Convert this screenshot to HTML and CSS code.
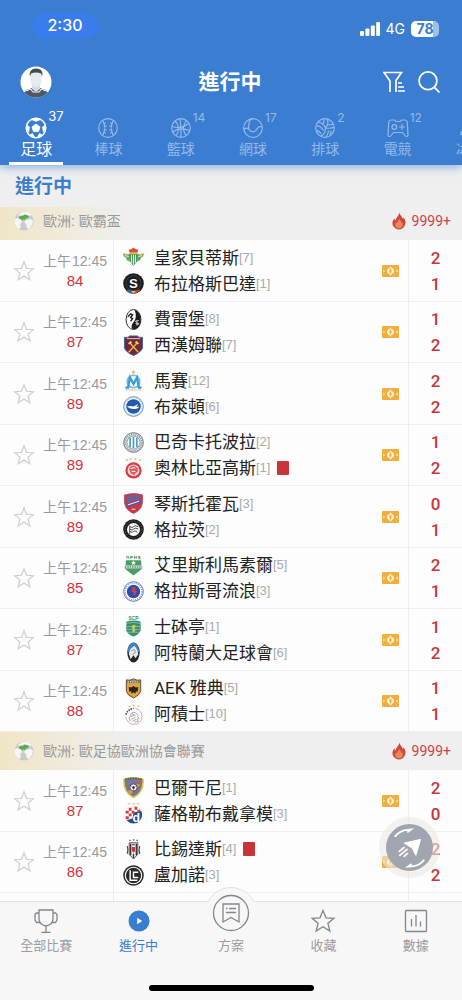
FILE: index.html
```html
<!DOCTYPE html>
<html lang="zh-Hant">
<head>
<meta charset="utf-8">
<meta name="viewport" content="width=device-width, initial-scale=1">
<title>進行中</title>
<link rel="stylesheet" href="styles.css">
</head>
<body>
<svg class="defs" aria-hidden="true">
  <symbol id="star" viewBox="0 0 22 22"><path d="M11 1.800l2.500 6.500 7 .4-5.400 4.400 1.800 6.800L11 16.100l-5.900 3.800 1.800-6.800L1.500 8.700l7-.4z" fill="none" stroke="currentColor" stroke-width="1.300" stroke-linejoin="miter"/></symbol>
  <symbol id="globe" viewBox="0 0 20 20">
    <circle cx="10" cy="10" r="9.500" fill="#c9cccd"/>
    <path d="M1 8l3-1 3 2 1 2-2 2 1 3-2 2A9.500 9.500 0 0 1 .6 9zM12 9l5-1 2 2-1 4-3 4-2-1-1-4-2-2zM8 1l6 0 4 3-3 1-4-1-5 1-2-1z" fill="#f5f6f6"/>
    <path d="M5 6l2-1.500L9 5l1-1.500 3 .5 2 1-1 2-2 .5-1 1.500-2-.5-1 1-1-1.500-2-.3z" fill="#58ac4c"/>
  </symbol>
  <symbol id="flame" viewBox="0 0 14 18">
    <path d="M7.500.5c.3 3 2.700 3.800 3.300 6.500l.9-1.500c1.800 2.500 2.500 5.500 1 8.300-1.100 2.300-3.200 3.700-5.700 3.700S1.900 16 .9 13.600C-.2 10.700 1 8 2.500 6c0 1.500.3 2 1 2.600C3.900 5.500 6.700 4.200 7.500.5z" fill="#d2473c"/>
    <path d="M7.300 6.500c.3 2 2.300 2.600 2.300 5l1-1.200c.9 2.700-.3 6-3.500 6-3.400 0-4.600-3-3.400-5.800l1.100 1.300c0-2.300 2.200-2.800 2.500-5.300z" fill="#e8895a"/>
  </symbol>
  <symbol id="cash" viewBox="0 0 17 12">
    <rect width="17" height="12" rx="1" fill="#f1ae3e"/>
    <path d="M8.500 1.300l1 1.400a3.400 3.400 0 0 1 0 6.600l-1 1.400-1-1.400a3.400 3.400 0 0 1 0-6.600z" fill="#fff3d6"/>
    <path d="M8.500 3.500v5M7 6h3" stroke="#f1ae3e" stroke-width="1.200"/>
    <path d="M1.500 4.500v3L3 6zM15.500 4.500v3L14 6z" fill="#fff3d6"/>
  </symbol>
</svg>

<div class="app">
  <header class="top">
    <div class="status">
      <span class="clock">2:30</span>
      <div class="signals">
        <svg class="bars" viewBox="0 0 20 14" aria-hidden="true"><g fill="#fff"><rect y="9" width="4" height="5" rx="1"/><rect x="5.400" y="6.500" width="4" height="7.500" rx="1"/><rect x="10.800" y="3.500" width="4" height="10.500" rx="1"/><rect x="16.200" width="3.800" height="14" rx="1"/></g></svg>
        <span class="net">4G</span>
        <span class="battery">78</span>
      </div>
    </div>
    <div class="titlebar">
      <button class="avatar" aria-label="個人">
        <svg viewBox="0 0 32 32"><defs><clipPath id="av"><circle cx="16" cy="16" r="15.500"/></clipPath></defs>
          <circle cx="16" cy="16" r="15.500" fill="#fff"/>
          <g clip-path="url(#av)"><path d="M1 32c0-5 3-7.500 7-8.500l4-1.500h8l4 1.500c4 1 7 3.500 7 8.500z" fill="#4d5965"/>
          <path d="M3 26l8-3 1.500 3h7l1.500-3 8 3" fill="none" stroke="#fff" stroke-width="1"/>
          <path d="M12 16h8v7l-4 3-4-3z" fill="#d5d9de"/>
          <path d="M10.500 8c0-3 11-3 11 0v6c0 4-3 7.500-5.500 7.500s-5.500-3.500-5.500-7.500z" fill="#e6e9ee"/>
          <path d="M10 10.500C8.800 5.500 11.500 2.500 16 2.500c5 0 7.500 3 6.100 8l-1-3c-3-1.200-7.100-1.200-10.100 0z" fill="#424b55"/></g></svg>
      </button>
      <h1>進行中</h1>
      <div class="actions">
        <button aria-label="篩選"><svg viewBox="0 0 22 22"><g fill="none" stroke="#fff" stroke-width="1.700"><path d="M7 21V10L1 1.500h17.500L13 9.500V21"/><path d="M15 12h4M15 16h6M15 20h7"/></g></svg></button>
        <button aria-label="搜尋"><svg viewBox="0 0 22 22"><g fill="none" stroke="#fff" stroke-width="1.800"><circle cx="10" cy="9.800" r="8.900"/><path d="M16.200 16.200l5.300 5.300"/></g></svg></button>
      </div>
    </div>
    <nav class="tabs" aria-label="運動">
      <button class="tab active"><span class="ico"><svg viewBox="0 0 22 22"><circle cx="11" cy="11" r="9.800" fill="none" stroke="#fff" stroke-width="1.500"/><path d="M11 7l4 2.900-1.500 4.700h-5L7 9.900zM6.500 2.500L11 4.300l4.500-1.800L11 1zM1.500 8l3 2-1 5-2-3.500zM20.500 8l-3 2 1 5 2-3.500zM5 18l2.500-1.500 2 4zM17 18l-2.500-1.500-2 4z" fill="#fff" stroke="#fff" stroke-width=".8"/></svg><sup>37</sup></span><span class="label">足球</span></button>
      <button class="tab"><span class="ico"><svg viewBox="0 0 22 22"><g fill="none" stroke="currentColor" stroke-width="1.200"><circle cx="11" cy="11" r="9.300"/><path d="M5.500 3.500c3 4.500 3 10.500 0 15M16.500 3.500c-3 4.500-3 10.500 0 15"/><path d="M6 6.500l3-.5M6.500 9h3.500M6.500 13h3.500M6 15.500l3 .5M16 6.500l-3-.5M15.500 9H12M15.500 13H12M16 15.500l-3 .5"/></g></svg></span><span class="label">棒球</span></button>
      <button class="tab"><span class="ico"><svg viewBox="0 0 22 22"><g fill="none" stroke="currentColor" stroke-width="1.200"><circle cx="11" cy="11" r="9.300"/><path d="M10 2c1 6 1 12 1 18M2 9.500c6 2 12 1 17-3.500M2.500 15c6-4 12-4 17.500-1M5 4c4.500 4 4.500 10 1 15M16.500 3.500c-4 5-4 10-.5 15"/></g></svg><sup>14</sup></span><span class="label">籃球</span></button>
      <button class="tab"><span class="ico"><svg viewBox="0 0 22 22"><g fill="none" stroke="currentColor" stroke-width="1.200"><circle cx="11" cy="11" r="9.300"/><path d="M11 1.700c-5 1-3.500 5-4.300 7.300-.8 3 1 5.500 4 5.800 3 .2 4-2.500 5.300-4.200 1.200-1.400 3-1 4.300-.6M1.700 13c2-2.500 4.300-1.500 5-1"/></g></svg><sup>17</sup></span><span class="label">網球</span></button>
      <button class="tab"><span class="ico"><svg viewBox="0 0 22 22"><g fill="none" stroke="currentColor" stroke-width="1.200"><circle cx="11" cy="11" r="9.300"/><path d="M11.500 11C10 7 6.500 5 3.500 5.500M11.500 11c3-3.500 3-6.500 1.500-9.200M11.500 11c4 .5 7 .2 8.700-1M11.500 11c0 4-2 7-5 8.300M8 7.500c2-1.500 2.500-3.500 2-5.500M2 9c3-.5 5.500 1 7.500 4.500M2.500 14c2-.7 3.500.5 4.500 3M14 7.500c1.500.5 3.500.2 5-.5M14.500 13.500c0 2.500-1 4.500-2.500 6.500M17 13.500c0 1.500-.3 2.500-.8 4"/></g></svg><sup>2</sup></span><span class="label">排球</span></button>
      <button class="tab"><span class="ico"><svg viewBox="0 0 22 22"><g fill="none" stroke="currentColor" stroke-width="1.200"><path d="M4 3h3.500l1.500 1.500h4L14.500 3H18q2 0 2.300 2L21 18q0 1.500-1.500 1.500-1 0-2-1.500l-2-2.500h-9l-2 2.500q-1 1.500-2 1.500Q1 19.500 1 18L1.700 5Q2 3 4 3z"/><circle cx="7.300" cy="10" r="2.300"/><path d="M12 10h6M15 7v6"/></g></svg><sup>12</sup></span><span class="label">電競</span></button>
      <button class="tab"><span class="ico"><svg viewBox="0 0 22 22"><path d="M2 18h7l8-16M2 18q-1-4 3-4h3l5-12" fill="none" stroke="currentColor" stroke-width="1.200"/></svg></span><span class="label">冰球</span></button>
    </nav>
  </header>

  <main>
    <h2 class="section">進行中</h2>

    <div class="league tucked"><svg class="globe"><use href="#globe"/></svg><h3>歐洲: 歐霸盃</h3><span class="heat"><svg><use href="#flame"/></svg>9999+</span></div>
    <div class="matches">
      <article class="match">
        <div class="when"><button class="fav" aria-label="收藏"><svg><use href="#star"/></svg></button><div><time><span>上午</span>12:45</time><b>84</b></div></div>
        <div class="teams"><div class="names">
          <p><svg viewBox="0 0 22 22"><path d="M0 7l7 1v7l-3-1-1-3-2-1zM22 7l-7 1v7l3-1 1-3 2-1z" fill="#6fa45c"/><path d="M6 7h10l-1 8-4 5-4-5z" fill="#4b9a5c"/><path d="M9 8v9M11 8v11M13 8v9M2 9l4 1M20 9l-4 1" stroke="#fff" stroke-width=".9"/><path d="M0 7l6 1M22 7l-6 1" stroke="#d9b652"/><path d="M7 6l-1-3 3-1 2-1.500L13 2l3 1-1 3z" fill="#d4523a"/><path d="M7 6.500h8" stroke="#e8b83e" stroke-width="1.500"/></svg>皇家貝蒂斯<small>[7]</small></p>
          <p><svg viewBox="0 0 22 22"><circle cx="11" cy="11" r="10.800" fill="#1d1c20"/><path d="M3.500 17q3 4.500 7.500 4.800v-3z" fill="#3568c7"/><path d="M11 21.800q4.500-.3 7.500-4.800L11 18.800z" fill="#d8402f"/><path d="M8.500 18.500h5L11 21.800z" fill="#ecc542"/><circle cx="11" cy="10.500" r="7.800" fill="#1d1c20" stroke="#555" stroke-width=".6"/><text x="11" y="15.500" class="mono s">S</text></svg>布拉格斯巴達<small>[1]</small></p>
        </div><svg class="cash"><use href="#cash"/></svg></div>
        <div class="score"><span>2</span><span>1</span></div>
      </article>
      <article class="match">
        <div class="when"><button class="fav" aria-label="收藏"><svg><use href="#star"/></svg></button><div><time><span>上午</span>12:45</time><b>87</b></div></div>
        <div class="teams"><div class="names">
          <p><svg viewBox="0 0 22 22"><ellipse cx="11" cy="11" rx="7.800" ry="10.500" fill="#fff" stroke="#222" stroke-width="1"/><path d="M12 1c8 1 9 18 1 20-6 1-4-5-1.500-8s2.500-8 .5-12z" fill="#1d1d1d"/><path d="M5 8l3-3 2 1-2 3 2 1-2 3" stroke="#1d1d1d" stroke-width="1.500" fill="none"/><path d="M12.500 13l4-1M13 15h4M14.500 12v5l2-1" stroke="#fff" stroke-width=".8" fill="none"/></svg>費雷堡<small>[8]</small></p>
          <p><svg viewBox="0 0 22 22"><path d="M1.500 2.500Q6 3 7 1h8q1 2 5.500 1.500v11Q19 18 11 21.500 3 18 1.500 13.500z" fill="#74263a" stroke="#426494"/><path d="M4 3.800h14" stroke="#cfd6e5"/><path d="M6 18l9-10M16 18L7 8" stroke="#e8bd43" stroke-width="1.500"/><path d="M5 9l3-3 1.500 2L7 10zM17 9l-3-3-1.500 2L15 10z" fill="#f2cc59"/></svg>西漢姆聯<small>[7]</small></p>
        </div><svg class="cash"><use href="#cash"/></svg></div>
        <div class="score"><span>1</span><span>2</span></div>
      </article>
      <article class="match">
        <div class="when"><button class="fav" aria-label="收藏"><svg><use href="#star"/></svg></button><div><time><span>上午</span>12:45</time><b>89</b></div></div>
        <div class="teams"><div class="names">
          <p><svg viewBox="0 0 22 22"><path d="M11 0l.6 1.300 1.400.2-1 1 .3 1.500-1.300-.7-1.300.7.300-1.500-1-1 1.400-.2z" fill="#dcae53"/><ellipse cx="11" cy="12" rx="6.500" ry="6.500" fill="none" stroke="#6fbde6" stroke-width="1.800"/><path d="M2.500 18.500h2.800L7.300 8 11 14.500 14.700 8l2 10.500h2.800" fill="none" stroke="#399bd3" stroke-width="2.400"/><path d="M3 21h16" stroke="#d7b06a" stroke-dasharray="2 .8"/></svg>馬賽<small>[12]</small></p>
          <p><svg viewBox="0 0 22 22"><circle cx="11" cy="11" r="10.300" fill="#fff" stroke="#4f7dbd" stroke-width=".9"/><circle cx="11" cy="11" r="9" fill="none" stroke="#8fadd6" stroke-width="1" stroke-dasharray="1 .8"/><circle cx="11" cy="11" r="7.600" fill="#245ba9"/><path d="M4 11q4-1 7 0l5-2.500-2 3 3-.5q-1 3-5 2.500-5 .5-8-2.500z" fill="#fff"/></svg>布萊頓<small>[6]</small></p>
        </div><svg class="cash"><use href="#cash"/></svg></div>
        <div class="score"><span>2</span><span>2</span></div>
      </article>
      <article class="match">
        <div class="when"><button class="fav" aria-label="收藏"><svg><use href="#star"/></svg></button><div><time><span>上午</span>12:45</time><b>89</b></div></div>
        <div class="teams"><div class="names">
          <p><svg viewBox="0 0 22 22"><circle cx="11" cy="11" r="10.300" fill="#e9ecef" stroke="#69737c"/><circle cx="11" cy="11" r="8.500" fill="none" stroke="#7e8991" stroke-width="2" stroke-dasharray="1 1.200"/><circle cx="11" cy="11" r="6.800" fill="#fff" stroke="#606970" stroke-width=".6"/><path d="M7.500 6v10M11 5v12M14.500 6v10" stroke="#4e9ecb" stroke-width="1.800"/></svg>巴奇卡托波拉<small>[2]</small></p>
          <p><svg viewBox="0 0 22 22"><path d="M3 2h2M7 1h2M12 1h2M17 2h2" stroke="#e0b85c" stroke-width="1.500"/><circle cx="11" cy="13" r="8.500" fill="#d93b43"/><circle cx="11" cy="13" r="6.200" fill="#f6dada"/><path d="M6.500 12q1-5 6-4l3.500 3-1 1 1 2-3 2-1 2-4-2z" fill="#dc5a60"/><path d="M8 11l4-1 1 1M9 14h4" stroke="#fff" stroke-width="1" fill="none"/></svg>奧林比亞高斯<small>[1]</small><i class="red" title="紅牌"></i></p>
        </div><svg class="cash"><use href="#cash"/></svg></div>
        <div class="score"><span>1</span><span>2</span></div>
      </article>
      <article class="match">
        <div class="when"><button class="fav" aria-label="收藏"><svg><use href="#star"/></svg></button><div><time><span>上午</span>12:45</time><b>89</b></div></div>
        <div class="teams"><div class="names">
          <p><svg viewBox="0 0 22 22"><path d="M1.500 2Q11-1 20.500 2v8q-1 8-9.500 11.500Q2.500 18 1.500 10z" fill="#ce3546" stroke="#a04a60" stroke-width=".8"/><path d="M4 3l14-1v4L4 10z" fill="#4272b5"/><path d="M7 2v7M10 2v6M13 2v5M16 2v4" stroke="#ce3546"/><path d="M3 12l16-5v3L4 15z" fill="#2f65ae"/><path d="M5 12.500l12-4" stroke="#fff" stroke-width="1"/><path d="M9 17h4" stroke="#eee"/></svg>琴斯托霍瓦<small>[3]</small></p>
          <p><svg viewBox="0 0 22 22"><circle cx="11" cy="11" r="10.800" fill="#1f1f1f"/><circle cx="11" cy="11" r="8.800" fill="none" stroke="#777" stroke-width="1" stroke-dasharray="1 2"/><circle cx="11" cy="11" r="6.800" fill="#fff"/><path d="M7 7v9M7 8q3 2 4 0t5 0M7 10.500q3 2 4 0t5 0M7 13q3 2 4 0t4 1" fill="none" stroke="#444" stroke-width="1"/></svg>格拉茨<small>[2]</small></p>
        </div><svg class="cash"><use href="#cash"/></svg></div>
        <div class="score"><span>0</span><span>1</span></div>
      </article>
      <article class="match">
        <div class="when"><button class="fav" aria-label="收藏"><svg><use href="#star"/></svg></button><div><time><span>上午</span>12:45</time><b>85</b></div></div>
        <div class="teams"><div class="names">
          <p><svg viewBox="0 0 22 22"><path d="M4 4V1.500h2V4M8 4V1.500h2v1.200H8M12 1v3M12 2.500h2M14 1v3M18 1.500h-2v1.200h2V4h-2" stroke="#549367" fill="none" stroke-width=".9"/><path d="M3 5.500h16v3l1 6-4 3-5 4-5-4-4-3 1-6z" fill="#4c9a65"/><path d="M1 11h20v3H1z" fill="#dceadf"/><path d="M2 12.500h18" stroke="#4c9a65" stroke-width="1.500" stroke-dasharray="1.500 1"/><path d="M11 5.500l.8 1.800h2l-1.600 1.200.6 2L11 9.400l-1.800 1.100.6-2L8.200 7.300h2z" fill="#fff"/></svg>艾里斯利馬素爾<small>[5]</small></p>
          <p><svg viewBox="0 0 22 22"><circle cx="11" cy="11" r="10.300" fill="#fff" stroke="#4b65b4" stroke-width=".9"/><circle cx="11" cy="11" r="8.900" fill="none" stroke="#7c90cb" stroke-width="1.300" stroke-dasharray="1.200 1"/><circle cx="11" cy="11" r="7" fill="#2c4faa"/><path d="M9 7l3-1 1.500 2-1 1.500 2 1-1 2.500-1 2-2.500-.5 1-2.500-2.500-1 1.500-2z" fill="#d43b50"/></svg>格拉斯哥流浪<small>[3]</small></p>
        </div><svg class="cash"><use href="#cash"/></svg></div>
        <div class="score"><span>2</span><span>1</span></div>
      </article>
      <article class="match">
        <div class="when"><button class="fav" aria-label="收藏"><svg><use href="#star"/></svg></button><div><time><span>上午</span>12:45</time><b>87</b></div></div>
        <div class="teams"><div class="names">
          <p><svg viewBox="0 0 22 22"><text x="11" y="4.500" class="mono scp">SCP</text><path d="M3.500 6Q11 3.500 18.500 6v9q-2 5-7.500 6.500Q5 20 3.500 15z" fill="#37906c"/><path d="M3 8q8-3 16 0M4 11h14M4 14h14M5 17h12" stroke="#9fcfb8" stroke-width=".7" fill="none"/><path d="M9.500 10l2.500-1 1.500 2-1.500 2 1 2.500-2 2-1.500-1.500 1-2.500-1.500-1z" fill="#d5c263"/></svg>士砵亭<small>[1]</small></p>
          <p><svg viewBox="0 0 22 22"><ellipse cx="11" cy="11" rx="6.500" ry="10.500" fill="#23262b"/><path d="M11 .8c4.500 0 6 5.500 6 10H5c0-4 1-10 6-10z" fill="#3a82c6"/><path d="M6 12l2-5 4-3 3 4 1 5-3 4-2-3-3 4z" fill="#e7e9ec"/><path d="M9 9l3-1 1 3-3 2" stroke="#8b9299" fill="none"/></svg>阿特蘭大足球會<small>[6]</small></p>
        </div><svg class="cash"><use href="#cash"/></svg></div>
        <div class="score"><span>1</span><span>2</span></div>
      </article>
      <article class="match">
        <div class="when"><button class="fav" aria-label="收藏"><svg><use href="#star"/></svg></button><div><time><span>上午</span>12:45</time><b>88</b></div></div>
        <div class="teams"><div class="names">
          <p><svg viewBox="0 0 22 22"><path d="M3.500 2Q7 3 11 1q4 2 7.500 1v12q-1 4-7.500 7-6.500-3-7.500-7z" fill="#e3a53a" stroke="#55493a"/><path d="M4.500 4h13" stroke="#555" stroke-width="2.400"/><path d="M5 4h12" stroke="#eee" stroke-width="1.200" stroke-dasharray="1.500 .8"/><path d="M6 9.500l2.500.5L11 8.500l2.500 1.500 2.500-.5-.5 5-2-.5-.5 2.500-2-1.500-2 1.500-.5-2.500-2 .5z" fill="#29241f"/></svg>AEK 雅典<small>[5]</small></p>
          <p><svg viewBox="0 0 22 22"><path d="M6 2.500h2M10 1.500h2M15 2.500h2" stroke="#dfb569" stroke-width="1.500"/><path d="M3 11q2-5 8-6.500" stroke="#444" stroke-width="1.800" stroke-dasharray="1.500 1" fill="none"/><path d="M13 4.500a8.500 8.500 0 1 1-10 9" stroke="#e6a2ae" fill="none"/><path d="M8 18q-3-3 0-6 0-4 5-3l3 3-1 1 2 2-2 1 1 2-4 1M8 13l4-1M9 16l4-2M10 18l4-2M9 10l4 2" stroke="#8e8e93" fill="none" stroke-width=".8"/></svg>阿積士<small>[10]</small></p>
        </div><svg class="cash"><use href="#cash"/></svg></div>
        <div class="score"><span>1</span><span>1</span></div>
      </article>
    </div>

    <div class="league"><svg class="globe"><use href="#globe"/></svg><h3>歐洲: 歐足協歐洲協會聯賽</h3><span class="heat"><svg><use href="#flame"/></svg>9999+</span></div>
    <div class="matches">
      <article class="match">
        <div class="when"><button class="fav" aria-label="收藏"><svg><use href="#star"/></svg></button><div><time><span>上午</span>12:45</time><b>87</b></div></div>
        <div class="teams"><div class="names">
          <p><svg viewBox="0 0 22 22"><path d="M1 2.500Q11-1 21 2.500q1 13-10 19Q0 15.500 1 2.500z" fill="#7774a0" stroke="#ddc843" stroke-width="1.600"/><path d="M2 2.500Q11 0 20 2.500" stroke="#5a5334" stroke-width="1.600" stroke-dasharray="2 .7" fill="none"/><path d="M5 15L18 5v3L8 18z" fill="#df9b43"/><path d="M13 6l5-1v3z" fill="#d94e35"/><circle cx="11" cy="11" r="3.700" fill="#fff" stroke="#333" stroke-width=".8"/><path d="M11 9.500l1.500 1.100-.6 1.700h-1.800l-.6-1.700z" fill="#222"/><path d="M8 9l1 1M14 9l-1 1M11 13v1.500" stroke="#222" stroke-width=".6"/></svg>巴爾干尼<small>[1]</small></p>
          <p><svg viewBox="0 0 22 22"><path d="M5 1h2M10 1h2M15 1h2" stroke="#dfb35b" stroke-width="1.400"/><circle cx="11" cy="12.500" r="9" fill="#294b8f"/><path d="M2 12a9 9 0 0 1 17-4l-8 2-1 6-6 2a9 9 0 0 1-2-6z" fill="#fff"/><path d="M6 5h3v3H6zM12 4h3v3h-3zM3 8h3v3H3zM9 8h3v3H9zM15 7h3v2h-3zM6 11h3v3H6zM3 14h3v3H3z" fill="#d63c3b"/><text x="14" y="19.500" class="mono d">d</text></svg>薩格勒布戴拿模<small>[3]</small></p>
        </div><svg class="cash"><use href="#cash"/></svg></div>
        <div class="score"><span>2</span><span>0</span></div>
      </article>
      <article class="match">
        <div class="when"><button class="fav" aria-label="收藏"><svg><use href="#star"/></svg></button><div><time><span>上午</span>12:45</time><b>86</b></div></div>
        <div class="teams"><div class="names">
          <p><svg viewBox="0 0 22 22"><path d="M6.500 1.500h1.500M10.300 .8h1.500M14 1.500h1.500" stroke="#555" stroke-width="1.300"/><path d="M6.500 4h9v12L11 21l-4.500-5z" fill="#f4f4f4" stroke="#39393c" stroke-width=".9"/><path d="M8 5v12M14 5v12M11 15.500V20" stroke="#39393c" stroke-width="1.500"/><path d="M4.500 7.500q1.300 4 0 8M17.500 7.500q-1.300 4 0 8" stroke="#444" stroke-width="1.200" fill="none"/><path d="M9.300 8.500h3.400v4L11 14.500l-1.700-2z" fill="#cf343d"/><path d="M9.500 6h3" stroke="#444" stroke-width="1.200"/></svg>比錫達斯<small>[4]</small><i class="red" title="紅牌"></i></p>
          <p><svg viewBox="0 0 22 22"><circle cx="11" cy="11" r="10.800" fill="#29292b"/><circle cx="11" cy="11" r="8.600" fill="none" stroke="#fff" stroke-width="1.200"/><path d="M7.500 5.500v10.500H15M16 7.500h-5v5.500h5" fill="none" stroke="#fff" stroke-width="1.500"/></svg>盧加諾<small>[3]</small></p>
        </div><svg class="cash"><use href="#cash"/></svg></div>
        <div class="score"><span>2</span><span>2</span></div>
      </article>
      <article class="match"><div class="when"></div><div class="teams"></div><div class="score"></div></article>
    </div>
  </main>

  <button class="fab" aria-label="直播">
    <svg viewBox="0 0 48 48"><circle cx="24" cy="24" r="24" fill="#a0a5af"/><path d="M19 19.500l16-3.500-4.500 15.500-3.300-7z" fill="#fff" stroke="#fff" stroke-width="1.500" stroke-linejoin="round"/><g stroke="#fff" stroke-width="1.700" stroke-linecap="round" fill="none"><path d="M13.500 28l5-4M14 32l7.500-6M18.500 33l3.500-3"/><path d="M9.500 12.500q4-5.500 12-6.500l4-.3-3 2.300" stroke-width="2"/><path d="M38.500 37q-4 5.500-12 6.300l-4 .2 3-2.200" stroke-width="2"/></g></svg>
  </button>

  <nav class="bottom" aria-label="主選單">
    <div class="items">
      <a href="#all"><svg viewBox="0 0 26 26"><g fill="none" stroke="currentColor" stroke-width="1.300"><path d="M6 2h14v9q0 5.500-7 7-7-1.500-7-7zM6 5H3.500L2 6.500V12l1.500 2.500H7M20 5h2.500L24 6.500V12l-1.500 2.500H19M13 18v6M8.500 24.300h9"/></g></svg>全部比賽</a>
      <a href="#live" class="on"><svg viewBox="0 0 26 26"><circle cx="13" cy="13" r="10.500" fill="#397dd0"/><path d="M11.200 9.800v6.400l5-3.200z" fill="#fff"/></svg>進行中</a>
      <a href="#plan" class="raised"><span class="bump"><svg viewBox="0 0 38 38"><g fill="none" stroke="#85858e" stroke-width="1.300"><circle cx="19" cy="19" r="17.500"/><path d="M11 10h16v18l-8-4.500-8 4.500z"/><path d="M14 14.500h1.500M17 14.500h7M14 18.500h10"/></g></svg></span><span class="label">方案</span></a>
      <a href="#fav"><svg viewBox="0 0 26 26"><path d="M13 2.500l3 7.300 8 .5-6.100 5 2 7.700-6.900-4.200L6.100 23l2-7.700-6.100-5 8-.5z" fill="none" stroke="currentColor" stroke-width="1.300"/></svg>收藏</a>
      <a href="#data"><svg viewBox="0 0 26 26"><g fill="none" stroke="currentColor" stroke-width="1.300"><rect x="2.500" y="2.500" width="21" height="21" rx="1"/><path d="M8.500 11v7.500M13 7v11.500M17.500 13.500v5"/></g></svg>數據</a>
    </div>
    <span class="home"></span>
  </nav>
</div>
</body>
</html>
```
FILE: styles.css
```css
* { box-sizing: border-box; margin: 0; padding: 0; }

body {
  font-family: "Liberation Sans", "Noto Sans CJK TC", sans-serif;
  background: #fdfdfd;
  color: #222;
}

button { border: 0; background: none; font: inherit; color: inherit; }
svg { display: block; flex: none; }
.defs { position: absolute; width: 0; height: 0; }

.app {
  position: relative;
  height: 100vh;
  display: flex;
  flex-direction: column;
  overflow: hidden;
}

/* blue header */
.top {
  position: relative;
  z-index: 2;
  flex: none;
  background: #3a7dd1;
  color: #fff;
  box-shadow: 0 2px 9px rgba(58, 125, 209, 0.6);
}
.status {
  display: flex;
  justify-content: space-between;
  align-items: flex-end;
  padding: 13px 23px 20px 32px;
}
.clock {
  background: #397cee;
  border-radius: 13px;
  width: 66px;
  text-align: center;
  font: 500 16px/25px Inter, sans-serif;
}
.signals { display: flex; align-items: center; gap: 6px; height: 18px; }
.bars { width: 20px; height: 14px; }
.net { font: 14px/18px Inter, sans-serif; }
.battery {
  width: 28px;
  border-radius: 5px;
  background: linear-gradient(90deg, #fff 78%, #9dc0ea 78%);
  color: #3a7dd1;
  font: 700 14px/16px Inter, sans-serif;
  text-align: center;
}
.titlebar {
  display: grid;
  grid-template-columns: 1fr auto 1fr;
  align-items: center;
  height: 48px;
  padding: 0 22px 0 20px;
}
.avatar, .avatar svg { width: 32px; height: 32px; }
h1 { font-size: 21px; line-height: 30px; font-weight: 700; }
.actions { display: flex; justify-content: flex-end; gap: 13px; }
.actions svg { width: 22px; height: 22px; }

.tabs { display: flex; overflow: hidden; }
.tab {
  flex: 0 0 15.65%;
  height: 59px;
  padding-top: 11px;
  display: flex;
  flex-direction: column;
  align-items: center;
  color: #92bae9;
  font-size: 14px;
  line-height: 20px;
}
.ico { position: relative; }
.ico svg { width: 22px; height: 22px; }
.ico sup {
  position: absolute;
  left: 23px;
  top: -7px;
  font: 12px/16px Inter, sans-serif;
}
.tab.active { color: #fff; font-size: 16px; line-height: 22px; }
.tab.active::after {
  content: "";
  width: 54px;
  height: 3px;
  margin-top: auto;
  background: #fff;
}
.tab.active sup { top: -9px; font-size: 13px; }

/* list */
main { flex: 1; min-height: 0; overflow: hidden; background: #efefef; }
.section {
  padding: 7px 15px 5px;
  font-size: 19px;
  line-height: 30px;
  color: #3a7dd1;
}
.league {
  display: flex;
  align-items: center;
  gap: 9px;
  height: 38px;
  padding: 0 11px 0 14px;
  background: linear-gradient(90deg, #f0e5c6, #efefef 130px);
  color: #999;
}
.league.tucked { height: 33px; padding-bottom: 5px; }
.league h3 { font-size: 14px; line-height: 20px; font-weight: 400; }
.globe { width: 20px; height: 20px; }
.heat {
  margin-left: auto;
  display: flex;
  align-items: center;
  gap: 6px;
  color: #cf4147;
  font: 14px/20px Roboto, sans-serif;
}
.heat svg { width: 14px; height: 18px; }

.match {
  display: grid;
  grid-template-columns: 114px 1fr 53px;
  min-height: 62px;
  background: #fdfdfd;
  border-bottom: 1px solid #eee;
}
.match:nth-child(even) { min-height: 61px; }
.when {
  display: flex;
  align-items: center;
  gap: 8px;
  padding-left: 13px;
  border-right: 1px solid #eee;
}
.when > div { text-align: center; }
.fav { color: #d2d2d2; }
.fav svg { width: 22px; height: 22px; }
time, .when b { display: block; line-height: 19px; white-space: nowrap; }
time { font-size: 14px; color: #999; }
time span { margin-right: 1px; }
.when b { font-size: 15px; font-weight: 400; color: #d3353c; }

.teams {
  display: flex;
  align-items: center;
  justify-content: space-between;
  padding: 0 9px;
  border-right: 1px solid #eee;
}
.names p {
  display: flex;
  align-items: center;
  font: 17px/26px Roboto, "Noto Sans CJK TC", sans-serif;
  white-space: nowrap;
}
.names p svg { width: 21px; height: 21px; margin-right: 10px; }
.names small { font: 13px/26px "Liberation Sans", sans-serif; color: #aaa; }
.red { width: 12px; height: 14px; margin-left: 7px; border-radius: 1px; background: #c93439; }
.cash { width: 17px; height: 12px; }
.score {
  display: flex;
  flex-direction: column;
  justify-content: center;
  text-align: center;
  color: #c9343a;
  font: 500 17px/26px Roboto, sans-serif;
}

.mono { text-anchor: middle; font-family: "Liberation Sans", sans-serif; font-weight: 700; fill: #fff; }
.s { font-size: 14px; }
.d { font-size: 13px; }
.scp { font-size: 5px; fill: #37906c; }

/* floating button */
.fab {
  position: absolute;
  z-index: 3;
  right: 22px;
  bottom: 122px;
  padding: 7px;
  border-radius: 50%;
  background: rgba(236, 231, 228, 0.6);
}
.fab svg { width: 47px; height: 47px; }

/* bottom navigation */
.bottom {
  position: relative;
  z-index: 2;
  flex: none;
  padding-bottom: 9px;
  background: #f7f7f7;
  border-top: 1px solid #e2e2e2;
}
.items { display: flex; height: 83px; }
.items a {
  flex: 1;
  display: flex;
  flex-direction: column;
  align-items: center;
  padding-top: 6px;
  color: #9c9ca3;
  text-decoration: none;
  font-size: 13px;
  line-height: 24px;
}
.items a > svg { width: 26px; height: 26px; color: #85858e; }
.items a.on { color: #397dd0; }
.items a.raised { position: relative; padding-top: 32px; }
.raised .label { position: relative; }
.bump {
  position: absolute;
  top: -15px;
  padding: 7px;
  border-radius: 50%;
  background: #f7f7f7;
}
/* outline only on the part that rises above the bar */
.bump::before {
  content: "";
  position: absolute;
  inset: 0;
  border: 1px solid #e2e2e2;
  border-radius: 50%;
  clip-path: inset(0 0 72% 0);
}
.bump svg { width: 38px; height: 38px; }
.home {
  display: block;
  width: 165px;
  height: 6px;
  margin: 0 auto;
  border-radius: 3px;
  background: #000;
}
```
